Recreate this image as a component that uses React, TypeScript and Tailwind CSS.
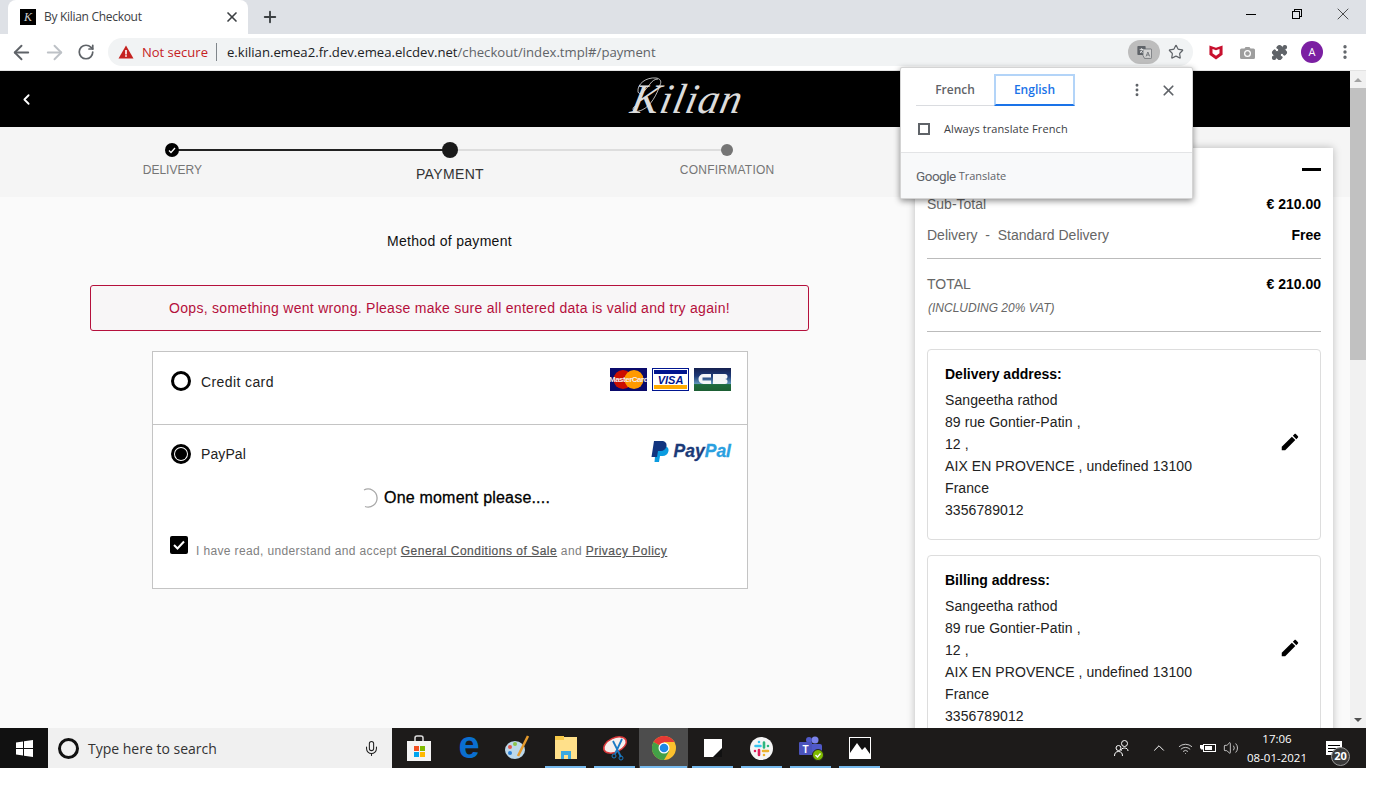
import type { ReactNode } from "react";
import { ArrowLeft, ArrowRight, ChevronLeft, ChevronUp, Mic, MoreVertical, Plus, Puzzle, RotateCw, Star, Volume2, Wifi, X } from "lucide-react";

function TranslateIcon() {
  return (
    <svg width="15" height="14" viewBox="0 0 20 18">
      <rect x="0.5" y="1" width="11" height="12" rx="1" fill="#5f6368" />
      <path d="M8 5h10.5a1 1 0 0 1 1 1v10.5a1 1 0 0 1-1 1H10l-2-4z" fill="#d4d4d4" stroke="#5f6368" />
      <path d="M3.5 5.5h5M6 4v1.5M4 10c2-1 3-3 3.5-4.5M4.5 7.5c.7 1.2 1.7 2 3 2.5" stroke="#fff" fill="none" strokeWidth="1" />
      <path d="M12 15l2.5-6 2.5 6M13 13h3" stroke="#5f6368" fill="none" />
    </svg>
  );
}

function McAfeeIcon() {
  return (
    <svg width="14" height="16" viewBox="0 0 16 18">
      <path d="M0.5 1.5 8 4l7.5-2.5V12L8 17.5.5 12z" fill="#c8102e" />
      <path d="M4 5.5 8 7l4-1.5v5L8 13.2 4 10.5z" fill="#fff" />
    </svg>
  );
}

function CameraIcon() {
  return (
    <svg width="15" height="13" viewBox="0 0 15 13">
      <path d="M1.5 2.500h3L5.500 1h4l1 1.500h3A1.500 1.500 0 0 1 15 4v7.500a1.500 1.500 0 0 1-1.500 1.500h-12A1.500 1.500 0 0 1 0 11.500V4a1.500 1.500 0 0 1 1.500-1.500z" fill="#9e9e9e" />
      <circle cx="7.5" cy="7.5" r="3.5" fill="#fff" />
      <circle cx="7.5" cy="7.5" r="2.2" fill="#9e9e9e" />
    </svg>
  );
}

function ChromeBar() {
  return (
    <div className="font-['Open_Sans',sans-serif]">
      <div className="flex h-[34px] bg-[#dee1e6]">
        <div className="ml-2 flex h-[34px] w-[240px] items-center rounded-t-lg bg-white pl-3 pr-[8px]">
          <div className="flex h-4 w-4 items-center justify-center bg-black font-['Liberation_Serif',serif] text-[12px] italic text-[#ccc]">K</div>
          <span className="ml-2 flex-1 text-[12px] tracking-[-0.3px] text-[#3c4043]">By Kilian Checkout</span>
          <X size={16} strokeWidth={2.5} className="text-[#3c4043]" />
        </div>
        <div className="ml-[13px] flex items-center">
          <Plus size={18} strokeWidth={2.5} className="text-[#3c4043]" />
        </div>
        <div className="ml-auto flex items-center pb-[6px]">
          <div className="flex w-[46px] justify-center"><div className="h-px w-[10px] bg-black" /></div>
          <div className="flex w-[46px] justify-center">
            <div className="relative h-[10px] w-[10px]">
              <div className="absolute right-0 top-0 h-2 w-2 border border-black" />
              <div className="absolute bottom-0 left-0 h-2 w-2 border border-black bg-[#dee1e6]" />
            </div>
          </div>
          <div className="flex w-[46px] justify-center"><X size={20} strokeWidth={0.8} className="text-black" /></div>
        </div>
      </div>
      <div className="flex h-[37px] items-center border-b border-[#e3e3e3] bg-white">
        <div className="flex w-[108px] items-center pl-[10px]">
          <ArrowLeft size={23} strokeWidth={2} className="text-[#5f6368]" />
          <ArrowRight size={23} strokeWidth={2} className="ml-[10px] text-[#bdc1c6]" />
          <RotateCw size={18} strokeWidth={2.3} className="ml-[11px] text-[#5f6368]" />
        </div>
        <div className="flex h-[28px] w-[1085px] items-center rounded-full bg-[#f1f3f4] pl-[10px] pr-[5px]">
          <svg width="16" height="14" viewBox="0 0 16 14">
            <path d="M8 0.5 15.5 13.5H.5z" fill="#c5221f" />
            <rect x="7.2" y="5" width="1.6" height="4.5" fill="#fff" />
            <rect x="7.2" y="10.2" width="1.6" height="1.6" fill="#fff" />
          </svg>
          <span className="ml-2 pt-px text-[13px] text-[#c5221f]">Not secure</span>
          <div className="ml-[8px] h-[18px] w-px bg-[#80868b]" />
          <span className="ml-[10px] pt-px text-[13.15px] text-[#202124]">
            e.kilian.emea2.fr.dev.emea.elcdev.net<span className="text-[#5f6368]">/checkout/index.tmpl#/payment</span>
          </span>
          <div className="ml-auto flex h-6 w-8 items-center justify-center rounded-xl bg-[#bdbdbd]">
            <TranslateIcon />
          </div>
          <Star size={16} strokeWidth={1.8} className="ml-[8px] mr-[4px] text-[#5f6368]" />
        </div>
        <div className="ml-4 flex items-center">
          <McAfeeIcon />
          <div className="ml-[17px]"><CameraIcon /></div>
          <Puzzle size={17} fill="#5f6368" strokeWidth={1.5} className="ml-[16px] text-[#5f6368]" />
          <div className="ml-[13px] flex h-[22px] w-[22px] items-center justify-center rounded-full bg-[#7b1fa2] text-[11px] text-white">A</div>
          <MoreVertical size={18} strokeWidth={2.5} className="ml-[13px] text-[#5f6368]" />
        </div>
      </div>
    </div>
  );
}

function TranslatePopup() {
  return (
    <div className="absolute left-[900px] top-[-4px] z-20 h-[132px] w-[293px] overflow-hidden rounded-[2px] border border-[#d4d4d4] bg-white shadow-[0_2px_6px_rgba(0,0,0,0.45)] font-['Open_Sans',sans-serif]">
      <div className="flex items-center pl-[15px] pr-[15px] pt-[6px]">
        <div className="flex h-[32px] w-[78px] items-center justify-center border-b border-[#dadce0] text-[12px] font-semibold text-[#5f6368]">French</div>
        <div className="flex h-[32px] w-[81px] items-center justify-center border-2 border-[#b3d4f8] border-b-[#1a73e8] text-[12px] font-semibold text-[#1a73e8]">English</div>
        <MoreVertical size={16} strokeWidth={2.4} className="ml-auto mr-[1px] text-[#5f6368]" />
        <X size={17} strokeWidth={2.4} className="ml-[14px] text-[#5f6368]" />
      </div>
      <div className="flex h-[46px] items-center pl-[17px]">
        <div className="h-3 w-3 border-2 border-[#5f6368]" />
        <span className="ml-[14px] text-[11px] tracking-[0.1px] text-[#3c4043]">Always translate French</span>
      </div>
      <div className="flex h-[47px] items-center border-t border-[#e3e4e6] bg-[#f8f9fa] pl-[15px] text-[#5f6368]">
        <span className="font-['Roboto',sans-serif] text-[13.5px] tracking-[-0.5px]">Google</span>
        <span className="ml-[3px] text-[11px]">Translate</span>
      </div>
    </div>
  );
}

function Logo() {
  return (
    <div className="relative ml-[25px]">
      <span className="inline-block -skew-x-12 font-['Liberation_Serif',serif] text-[42px] italic leading-none tracking-[1px] text-[#dcdcdc]">Kilian</span>
      <svg width="40" height="44" viewBox="0 0 40 44" className="absolute left-0 -top-[2px]" fill="none" stroke="#e4e4e4" strokeWidth="0.8">
        <path d="M6 16C5 8 14 1 24 2c4 .5 6 3 4 7-3 9-9 21-18 25-5 2-9 2-9-1 0-2 2-3 3-2" />
        <path d="M6 16c2 4 6 0 12-8 2-3 5-5 8-5" />
      </svg>
    </div>
  );
}

function Stepper() {
  return (
    <div className="relative grid h-[70px] grid-cols-3 bg-[#f5f5f5] pr-[484px] pl-[33px] font-['Liberation_Sans',sans-serif]">
      <div className="absolute left-[172px] top-[22px] h-[2px] w-[278px] bg-[#222]" />
      <div className="absolute left-[450px] top-[22px] h-[2px] w-[277px] bg-[#ddd]" />
      <div className="relative flex flex-col items-center pt-4">
        <div className="flex h-[14px] w-[14px] items-center justify-center rounded-full bg-black">
          <svg width="8" height="7" viewBox="0 0 8 7"><path d="M1 3.5 3 5.5 7 1" stroke="#fff" strokeWidth="1.3" fill="none" /></svg>
        </div>
        <span className="ml-px mt-[6px] text-[12px] leading-[14px] text-[#757575]">DELIVERY</span>
      </div>
      <div className="relative ml-px flex flex-col items-center pt-[15px]">
        <div className="h-4 w-4 rounded-full bg-[#1a1a1a]" />
        <span className="mt-2 text-[14px] leading-[16px] tracking-[0.35px] text-[#333]">PAYMENT</span>
      </div>
      <div className="relative flex flex-col items-center pt-[17px]">
        <div className="h-3 w-3 rounded-full bg-[#757575]" />
        <span className="mt-[7px] text-[12px] leading-[14px] tracking-[0.25px] text-[#757575]">CONFIRMATION</span>
      </div>
    </div>
  );
}

function CardLogos() {
  return (
    <div className="flex gap-[5px]">
      <svg width="37" height="23" viewBox="0 0 37 23">
        <rect width="37" height="23" fill="#0a0a6b" />
        <circle cx="13" cy="11.5" r="9.5" fill="#cc0f00" />
        <circle cx="24" cy="11.5" r="9.5" fill="#ff9a00" />
        <text x="18.5" y="14.2" textAnchor="middle" fontSize="8" fontWeight="700" fill="#f4f0f0" fontFamily="Liberation Sans, sans-serif" letterSpacing="-0.5">MasterCard</text>
      </svg>
      <svg width="37" height="23" viewBox="0 0 37 23">
        <rect x="0.5" y="0.5" width="36" height="22" fill="#fff" stroke="#00158f" />
        <rect x="2" y="2" width="33" height="4" fill="#00158f" />
        <rect x="2" y="17" width="33" height="4" fill="#ffab00" />
        <text x="18.5" y="16" textAnchor="middle" fontSize="11" fontWeight="700" fontStyle="italic" fill="#00158f" fontFamily="Liberation Sans, sans-serif">VISA</text>
      </svg>
      <svg width="37" height="23" viewBox="0 0 37 23">
        <defs>
          <linearGradient id="cbBg" x1="0" y1="0" x2="0" y2="1">
            <stop offset="0" stopColor="#15204f" />
            <stop offset="0.35" stopColor="#1d3a78" />
            <stop offset="0.68" stopColor="#5f94b8" />
            <stop offset="0.72" stopColor="#1d6b3c" />
            <stop offset="1" stopColor="#1d5f34" />
          </linearGradient>
        </defs>
        <rect width="37" height="23" fill="url(#cbBg)" />
        <path d="M17 6H9.5a5 5 0 0 0 0 10H17v-3.500H8.500v-3H17zM19 6h12a2.500 2.500 0 0 1 0 5 2.500 2.500 0 0 1 0 5H19z" fill="#f4f6f8" />
      </svg>
    </div>
  );
}

function PaypalLogo() {
  return (
    <div className="flex items-center">
      <svg width="18" height="21" viewBox="0 0 18 21">
        <path d="M5 5h7.500c3.500 0 5.500 2 5 5-.6 3.500-3 5-6 5H9l-1 6H3.500z" fill="#0b9ce0" />
        <path d="M3 0h7.500c3.500 0 5.500 2 5 5-.6 3.500-3 5-6 5H7l-1 6H.5z" fill="#12357f" />
      </svg>
      <span className="ml-[5px] font-['Liberation_Sans',sans-serif] text-[17.5px] font-bold italic leading-none text-[#1b3a78] [-webkit-text-stroke:0.3px_#1b3a78]">
        Pay<span className="text-[#2aa0e0] [-webkit-text-stroke:0.3px_#2aa0e0]">Pal</span>
      </span>
    </div>
  );
}

function Radio({ checked }: { checked?: boolean }) {
  return (
    <div className="flex h-5 w-5 items-center justify-center rounded-full border-[3px] border-black bg-white">
      {checked && <div className="h-3 w-3 rounded-full bg-black" />}
    </div>
  );
}

function PaymentColumn() {
  return (
    <div className="w-[915px] shrink-0 pl-[90px] pr-[106px] pt-[37px] font-['Liberation_Sans',sans-serif]">
      <p className="text-center text-[14px] leading-[14px] tracking-[0.3px] text-[#111]">Method of payment</p>
      <div className="mt-[37px] flex h-[46px] w-[719px] items-center justify-center rounded-[3px] border border-[#b5103c] bg-[#f8f6f7] text-[14px] tracking-[0.28px] text-[#b5103c]">
        Oops, something went wrong. Please make sure all entered data is valid and try again!
      </div>
      <div className="ml-[62px] mt-5 h-[238px] w-[596px] border border-[#c4c4c4] bg-white">
        <div className="flex h-[73px] border-b border-[#c4c4c4] pl-[18px] pr-4 pt-[19px]">
          <Radio />
          <span className="ml-[10px] mt-[3px] text-[14px] leading-[16px] tracking-[0.4px] text-[#222]">Credit card</span>
          <div className="ml-auto -mt-[3px]"><CardLogos /></div>
        </div>
        <div className="flex pl-[18px] pr-4 pt-[19px]">
          <Radio checked />
          <span className="ml-[10px] mt-[2px] text-[14px] leading-[16px] tracking-[0.1px] text-[#222]">PayPal</span>
          <div className="ml-auto -mt-[3px]"><PaypalLogo /></div>
        </div>
        <div className="mt-6 flex items-center pl-[205px]">
          <svg width="20" height="20" viewBox="0 0 20 20">
            <path d="M6 2a9 9 0 1 1 1 16.500" stroke="#a8a8a8" strokeWidth="1.3" fill="none" />
          </svg>
          <span className="ml-[6px] text-[16px] leading-[20px] tracking-[0.2px] text-black [-webkit-text-stroke:0.3px_black]">One moment please....</span>
        </div>
        <div className="mt-7 flex pl-[17px]">
          <div className="flex h-[18px] w-[18px] shrink-0 items-center justify-center rounded-[2px] bg-black">
            <svg width="12" height="10" viewBox="0 0 12 10"><path d="M1 5 4.500 8.500 11 1.500" stroke="#fff" strokeWidth="2" fill="none" /></svg>
          </div>
          <p className="ml-2 mt-2 whitespace-nowrap text-[12px] leading-[14px] tracking-[0.36px] text-[#808080]">
            I have read, understand and accept <span className="tracking-[0.5px] text-[#555] underline [-webkit-text-stroke:0.2px_#555]">General Conditions of Sale</span> and <span className="tracking-[0.5px] text-[#555] underline [-webkit-text-stroke:0.2px_#555]">Privacy Policy</span>
          </p>
        </div>
      </div>
    </div>
  );
}

function AddressCard({ title }: { title: string }) {
  return (
    <div className="flex h-[191px] shrink-0 items-center justify-between rounded-[4px] border border-[#ddd] pb-[5px] pl-[17px] pr-[19px]">
      <div className="text-[14px] leading-[22px] tracking-[0.08px] text-[#222]">
        <p className="-mt-px mb-1 font-bold tracking-normal text-black">{title}</p>
        <p>Sangeetha rathod</p>
        <p>89 rue Gontier-Patin ,</p>
        <p>12 ,</p>
        <p>AIX EN PROVENCE , undefined 13100</p>
        <p>France</p>
        <p>3356789012</p>
      </div>
      <svg width="22" height="22" viewBox="0 0 24 24" fill="#000">
        <path d="M3 17.25V21h3.75L17.81 9.94l-3.75-3.75L3 17.25zM20.71 7.04c.39-.39.39-1.02 0-1.41l-2.34-2.34c-.39-.39-1.02-.39-1.41 0l-1.83 1.83 3.75 3.75 1.83-1.83z" />
      </svg>
    </div>
  );
}

function SummaryPanel() {
  return (
    <div className="relative z-10 -mt-[49px] h-[600px] w-[418px] shrink-0 bg-white px-3 pt-5 font-['Liberation_Sans',sans-serif] shadow-[0_0_8px_rgba(0,0,0,0.25)]">
      <div className="flex justify-end"><div className="h-[3px] w-[19px] bg-black" /></div>
      <div className="mt-[25px] flex justify-between text-[14px] leading-[16px] text-[#666]">
        <span>Sub-Total</span>
        <span className="font-bold text-black">€ 210.00</span>
      </div>
      <div className="mt-[15px] flex justify-between text-[14px] leading-[16px] text-[#666]">
        <span>Delivery &nbsp;-&nbsp; Standard Delivery</span>
        <span className="font-bold text-black">Free</span>
      </div>
      <div className="mt-[15px] h-px bg-[#bbb]" />
      <div className="mt-[17px] flex justify-between text-[14px] leading-[16px] text-[#666]">
        <span>TOTAL</span>
        <span className="font-bold text-black">€ 210.00</span>
      </div>
      <p className="ml-px mt-[9px] text-[12px] italic leading-[14px] text-[#666]">(INCLUDING 20% VAT)</p>
      <div className="mt-4 h-px bg-[#bbb]" />
      <div className="mt-[17px] flex flex-col gap-[15px]">
        <AddressCard title="Delivery address:" />
        <AddressCard title="Billing address:" />
      </div>
    </div>
  );
}

function Scrollbar() {
  return (
    <div className="flex w-4 shrink-0 flex-col items-center bg-[#f1f1f1]">
      <div className="flex h-[17px] items-center"><div className="h-0 w-0 border-x-[4px] border-b-[4px] border-x-transparent border-b-[#a3a3a3]" /></div>
      <div className="h-[272px] w-full bg-[#c1c1c1]" />
      <div className="mt-auto flex h-[17px] items-center"><div className="h-0 w-0 border-x-[4px] border-t-[4px] border-x-transparent border-t-[#505050]" /></div>
    </div>
  );
}

function TaskIcon({ active, open, children }: { active?: boolean; open?: boolean; children: ReactNode }) {
  return (
    <div className={active ? "relative flex h-10 w-[49px] items-center justify-center bg-[#4d4d4d]" : "relative flex h-10 w-[49px] items-center justify-center"}>
      {children}
      {open && <div className={active ? "absolute inset-x-px bottom-0 h-[2px] bg-[#76b9ed]" : "absolute inset-x-1 bottom-0 h-[2px] bg-[#76b9ed]"} />}
    </div>
  );
}

function Taskbar() {
  return (
    <div className="flex h-10 items-center bg-[#1d1b1a] font-['Open_Sans',sans-serif]">
      <div className="flex h-10 w-12 items-center justify-center bg-[#111]">
        <svg width="17" height="17" viewBox="0 0 17 17" fill="#fff">
          <path d="M0 2.500 7 1.500V8H0zM8 1.300 17 0V8H8zM0 9h7v6.500L0 14.500zM8 9h9v8l-9-1.300z" />
        </svg>
      </div>
      <div className="flex h-10 w-[344px] items-center bg-[#f0f0f0] pl-[10px] pr-[12px]">
        <div className="h-[21px] w-[21px] rounded-full border-[3px] border-[#111]" />
        <span className="ml-[9px] flex-1 text-[14px] text-[#333]">Type here to search</span>
        <Mic size={17} strokeWidth={1.5} className="text-[#222]" />
      </div>
      <div className="ml-[2px] flex">
        <TaskIcon>
          <svg width="24" height="26" viewBox="0 0 24 26">
            <path d="M8 6V3a2 2 0 0 1 2-2h4a2 2 0 0 1 2 2v3" stroke="#ddd" strokeWidth="1.5" fill="none" />
            <rect y="6" width="24" height="20" fill="#f4f4f4" />
            <rect x="7" y="11" width="5" height="5" fill="#f25022" />
            <rect x="13" y="11" width="5" height="5" fill="#7fba00" />
            <rect x="7" y="17" width="5" height="5" fill="#00a4ef" />
            <rect x="13" y="17" width="5" height="5" fill="#ffb900" />
          </svg>
        </TaskIcon>
        <TaskIcon>
          <span className="-mt-[6px] ml-[3px] font-['Liberation_Sans',sans-serif] text-[38px] font-bold leading-none text-[#0a6fd0]">e</span>
        </TaskIcon>
        <TaskIcon>
          <svg width="26" height="26" viewBox="0 0 26 26">
            <ellipse cx="11" cy="15" rx="10" ry="9" fill="#bcd8ea" />
            <circle cx="6" cy="12" r="2" fill="#e2574c" />
            <circle cx="11" cy="9" r="2" fill="#8bc34a" />
            <circle cx="6" cy="18" r="2" fill="#2a7fd5" />
            <path d="M14 21 24 1" stroke="#e59a2c" strokeWidth="2.5" />
          </svg>
        </TaskIcon>
        <TaskIcon open>
          <svg width="22" height="24" viewBox="0 0 22 24">
            <rect y="1" width="22" height="22" fill="#ffe08a" />
            <rect y="0" width="9" height="4" fill="#f7c948" />
            <path d="M6 23V15h10v8h-3v-4H9v4z" fill="#39a9e0" />
          </svg>
        </TaskIcon>
        <TaskIcon open>
          <svg width="26" height="26" viewBox="0 0 26 26">
            <ellipse cx="13" cy="10" rx="12" ry="7" fill="#f6f0ee" stroke="#d9383a" strokeWidth="1.5" transform="rotate(-25 13 10)" />
            <path d="M11 6 19 22M20 4 13 19" stroke="#1a7ac4" strokeWidth="1.8" />
            <circle cx="19" cy="23" r="2" fill="none" stroke="#1a7ac4" />
            <circle cx="12" cy="21" r="2" fill="none" stroke="#1a7ac4" />
          </svg>
        </TaskIcon>
        <TaskIcon active open>
          <svg width="24" height="24" viewBox="0 0 24 24">
            <circle cx="12" cy="12" r="12" fill="#fbc02d" />
            <path d="M12 12 1.600 6A12 12 0 0 1 22.400 6H12z" fill="#e53935" />
            <path d="M12 12 1.600 6A12 12 0 0 0 12 24l5.200-9z" fill="#43a047" />
            <circle cx="12" cy="12" r="5.5" fill="#fff" />
            <circle cx="12" cy="12" r="4.3" fill="#1e88e5" />
          </svg>
        </TaskIcon>
        <TaskIcon open>
          <svg width="18" height="18" viewBox="0 0 18 18">
            <path d="M0 0h18v10l-8 8H0z" fill="#fff" />
            <path d="M18 9v9H9z" fill="#111" />
          </svg>
        </TaskIcon>
        <TaskIcon open>
          <svg width="23" height="23" viewBox="0 0 23 23" fill="none" strokeWidth="2.6" strokeLinecap="round">
            <circle cx="11.5" cy="11.5" r="11.5" fill="#f5f5f5" />
            <path d="M5.500 9h5M9 5h.01" stroke="#36c5f0" />
            <path d="M14 5.500v5M18 9h.01" stroke="#2eb67d" />
            <path d="M13 14h5M14 18h.01" stroke="#ecb22e" />
            <path d="M9 13v5M5 14h.01" stroke="#e01e5a" />
          </svg>
        </TaskIcon>
        <TaskIcon open>
          <svg width="26" height="26" viewBox="0 0 26 26">
            <circle cx="17" cy="5" r="3.5" fill="#7b83eb" />
            <rect x="11" y="9" width="13" height="11" rx="2" fill="#5059c9" />
            <circle cx="11" cy="5" r="3" fill="#5059c9" />
            <rect x="1" y="7" width="13" height="13" rx="1" fill="#4b53bc" />
            <text x="7.5" y="17.5" textAnchor="middle" fontSize="10" fontWeight="700" fill="#fff" fontFamily="Liberation Sans, sans-serif">T</text>
            <circle cx="20" cy="20" r="5.5" fill="#7fba00" stroke="#222" />
            <path d="M17.500 20 19.500 22 22.500 18.500" stroke="#fff" strokeWidth="1.3" fill="none" />
          </svg>
        </TaskIcon>
        <TaskIcon open>
          <svg width="22" height="22" viewBox="0 0 22 22">
            <rect x="0.5" y="0.5" width="21" height="21" fill="#111" stroke="#fff" />
            <path d="M1 21V16L8 6l5 7 3-3 5 7v4z" fill="#fff" />
          </svg>
        </TaskIcon>
      </div>
      <div className="ml-auto flex items-center text-white">
        <svg width="18" height="18" viewBox="0 0 18 18" fill="none" stroke="#fff" strokeWidth="1" className="mr-[19px]">
          <circle cx="11.5" cy="4.5" r="3" />
          <path d="M8 12c0-2 1.500-3 3.500-3s3.500 1 3.500 3" />
          <circle cx="5.500" cy="9" r="2.5" />
          <path d="M1.500 17c0-3 1.500-4.500 4-4.500s4 1.500 4 4.500" />
        </svg>
        <ChevronUp size={18} strokeWidth={1.3} className="mr-[10px]" />
        <Wifi size={15} strokeWidth={1.2} className="mr-[7px]" />
        <svg width="16" height="12" viewBox="0 0 16 12" className="mr-[7px]">
          <rect x="3.5" y="2.5" width="12" height="7" fill="none" stroke="#fff" />
          <rect x="5" y="4" width="7" height="4" fill="#fff" />
          <path d="M0 3h4v3l-2 2-2-2z" fill="#fff" />
        </svg>
        <Volume2 size={16} strokeWidth={1.1} />
        <div className="ml-[2px] flex w-[72px] flex-col items-center whitespace-nowrap text-[11.5px] leading-[19px]">
          <span>17:06</span>
          <span>08-01-2021</span>
        </div>
        <div className="relative ml-[12px] mr-[14px] h-10 w-[27px]">
          <div className="absolute left-[1px] top-[13px] flex h-[14px] w-[16px] flex-col justify-center gap-[2px] bg-white px-[2px]">
            <div className="h-px bg-black" />
            <div className="h-px bg-black" />
            <div className="h-px bg-black" />
          </div>
          <div className="absolute left-[6px] top-[19px] flex h-[19px] w-[19px] items-center justify-center rounded-full border border-[#999] bg-[#3a3a3a] text-[11px] font-bold">20</div>
        </div>
      </div>
    </div>
  );
}

export default function App() {
  return (
    <div className="h-[796px] w-[1380px] overflow-hidden bg-white">
      <div className="flex h-[768px] w-[1366px] flex-col">
        <ChromeBar />
        <div className="relative flex h-[657px]">
          <TranslatePopup />
          <div className="min-w-0 flex-1 overflow-hidden bg-[#fafafa]">
            <div className="relative flex h-[56px] items-center justify-center bg-black">
              <ChevronLeft size={17} strokeWidth={2.5} className="absolute left-[18px] top-[20px] text-white" />
              <Logo />
            </div>
            <Stepper />
            <div className="flex">
              <PaymentColumn />
              <SummaryPanel />
            </div>
          </div>
          <Scrollbar />
        </div>
        <Taskbar />
      </div>
    </div>
  );
}
